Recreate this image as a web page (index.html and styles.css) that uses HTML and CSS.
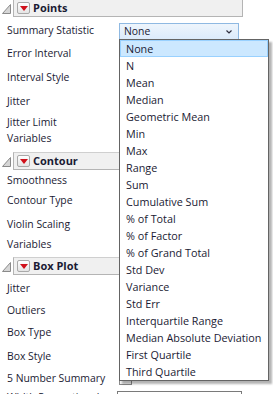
FILE: index.html
```html
<!DOCTYPE html>
<html lang="en">
<head>
    <meta charset="UTF-8" />
    <title>Points / Contour / Box Plot options</title>
    <link rel="stylesheet" href="styles.css">
</head>
<body>
<div class="panel">

    <!-- Points -->
    <section class="group group-first">
        <div class="group-head">
            <svg class="twisty" width="9" height="10" viewBox="0 0 9 10"><path d="M8.5 0.5V9.5H0.5Z" /></svg>
            <div class="head-bar">
                <span class="menu-btn"><svg width="8" height="5" viewBox="0 0 8 5"><path d="M0 0H8L4 5Z" /></svg></span>
                <span class="head-title">Points</span>
            </div>
        </div>
        <div class="group-body">
            <div class="row h23">
                <span class="label">Summary Statistic</span>
                <div class="combo">
                    <span>None</span>
                    <svg class="chevron" width="6" height="4" viewBox="0 0 6 4"><path d="M0.5 0.5L3 3L5.5 0.5" /></svg>
                </div>
            </div>
            <div class="row h24"><span class="label">Error Interval</span></div>
            <div class="row h24"><span class="label">Interval Style</span></div>
            <div class="row h21"><span class="label">Jitter</span></div>
            <div class="row h16"><span class="label">Jitter Limit</span></div>
            <div class="row h17"><span class="label">Variables</span></div>
        </div>
    </section>

    <!-- Contour -->
    <section class="group">
        <div class="group-head">
            <svg class="twisty" width="9" height="10" viewBox="0 0 9 10"><path d="M8.5 0.5V9.5H0.5Z" /></svg>
            <div class="head-bar">
                <span class="menu-btn"><svg width="8" height="5" viewBox="0 0 8 5"><path d="M0 0H8L4 5Z" /></svg></span>
                <span class="head-title">Contour</span>
            </div>
        </div>
        <div class="group-body tight">
            <div class="row h20"><span class="label">Smoothness</span></div>
            <div class="row h24"><span class="label">Contour Type</span></div>
            <div class="row h20"><span class="label">Violin Scaling</span></div>
            <div class="row h16"><span class="label">Variables</span></div>
        </div>
    </section>

    <!-- Box Plot -->
    <section class="group">
        <div class="group-head">
            <svg class="twisty" width="9" height="10" viewBox="0 0 9 10"><path d="M8.5 0.5V9.5H0.5Z" /></svg>
            <div class="head-bar">
                <span class="menu-btn"><svg width="8" height="5" viewBox="0 0 8 5"><path d="M0 0H8L4 5Z" /></svg></span>
                <span class="head-title">Box Plot</span>
            </div>
        </div>
        <div class="group-body">
            <div class="row h22"><span class="label">Jitter</span></div>
            <div class="row h22"><span class="label">Outliers</span></div>
            <div class="row h24"><span class="label">Box Type</span></div>
            <div class="row h22"><span class="label">Box Style</span></div>
            <div class="row h19">
                <span class="label">5 Number Summary</span>
                <span class="check"></span>
            </div>
            <div class="row h22">
                <span class="label">Width Proportional</span>
                <div class="field"></div>
            </div>
        </div>
    </section>

    <!-- open list of the Summary Statistic combo -->
    <ul class="dropdown">
        <li class="selected">None</li>
        <li>N</li>
        <li>Mean</li>
        <li>Median</li>
        <li>Geometric Mean</li>
        <li>Min</li>
        <li>Max</li>
        <li>Range</li>
        <li>Sum</li>
        <li>Cumulative Sum</li>
        <li>% of Total</li>
        <li>% of Factor</li>
        <li>% of Grand Total</li>
        <li>Std Dev</li>
        <li>Variance</li>
        <li>Std Err</li>
        <li>Interquartile Range</li>
        <li>Median Absolute Deviation</li>
        <li>First Quartile</li>
        <li>Third Quartile</li>
    </ul>
</div>
</body>
</html>
```

FILE: styles.css
```css
:root {
    --text: #1a1a33;
    --head-bg: #f0f0f0;
    --head-line: #b4b4b4;
    --menu-red: #d0101a;
}

* {
    box-sizing: border-box;
    margin: 0;
    padding: 0;
}

body {
    width: 273px;
    height: 394px;
    overflow: hidden;
    background: #fff;
    font-family: "Open Sans", "Noto Sans", sans-serif;
    font-size: 10.4px;
    color: var(--text);
}

.panel {
    position: relative;
    height: 100%;
}

.group-first {
    margin-top: -1px;
}

.group-head {
    display: flex;
    align-items: center;
    height: 18px;
}

.twisty {
    width: 9px;
    height: 10px;
    margin: 2px 2px 0 2px;
    flex-shrink: 0;
}

.twisty path {
    fill: #d6d6d6;
    stroke: #8a8a8a;
    stroke-width: 1;
}

.head-bar {
    display: flex;
    align-items: center;
    gap: 3px;
    width: 230px;
    height: 18px;
    padding-left: 3px;
    background: var(--head-bg);
    border: 1px solid var(--head-line);
    border-color: #cfcfcf var(--head-line) var(--head-line) var(--head-line);
}

.menu-btn {
    display: flex;
    align-items: center;
    justify-content: center;
    width: 13px;
    height: 12px;
    border: 1px solid #a9a9a9;
    border-radius: 2px;
    background: linear-gradient(#ffffff, #e4e4e4);
}

.menu-btn path {
    fill: var(--menu-red);
}

.head-title {
    font-weight: bold;
    font-size: 11px;
    line-height: 16px;
}

.group-body {
    padding: 5px 0 5px;
}

.group-body.tight {
    padding-top: 2px;
}

.row {
    display: grid;
    grid-template-columns: 119px 1fr;
    align-items: start;
}

.h16 { height: 16px; }
.h17 { height: 17px; }
.h19 { height: 19px; }
.h20 { height: 20px; }
.h21 { height: 21px; }
.h22 { height: 22px; }
.h23 { height: 23px; }
.h24 { height: 24px; }

.label {
    padding-left: 7px;
    line-height: 16px;
    white-space: nowrap;
}

.combo {
    display: flex;
    align-items: center;
    justify-content: space-between;
    width: 120px;
    height: 17px;
    margin-top: 1px;
    padding: 0 6px 0 4px;
    border: 1px solid #8fb9e2;
    background: linear-gradient(#eef5fc, #dcebfb);
    line-height: 15px;
}

.chevron path {
    fill: none;
    stroke: #303040;
    stroke-width: 1.2;
}

.check {
    width: 13px;
    height: 13px;
    margin-top: 2px;
    border: 1px solid #8a8a8a;
    background: #f4f4f4;
}

.field {
    width: 125px;
    height: 18px;
    margin: 2px 0 0 -2px;
    border: 1px solid #7a7a7a;
    background: #fff;
}

/* open list, drawn over the form */
.dropdown {
    position: absolute;
    left: 119px;
    top: 40px;
    width: 150px;
    list-style: none;
    background: #fff;
    border: 1px solid #646464;
    box-shadow: 3px 3px 2px rgba(0, 0, 0, 0.3);
    font-size: 10.8px;
}

.dropdown li {
    height: 17px;
    padding-left: 5px;
    line-height: 15px;
    white-space: nowrap;
    border: 1px solid transparent;
}

.dropdown li.selected {
    background: #cce8ff;
    border-color: #99d1ff;
}
```
